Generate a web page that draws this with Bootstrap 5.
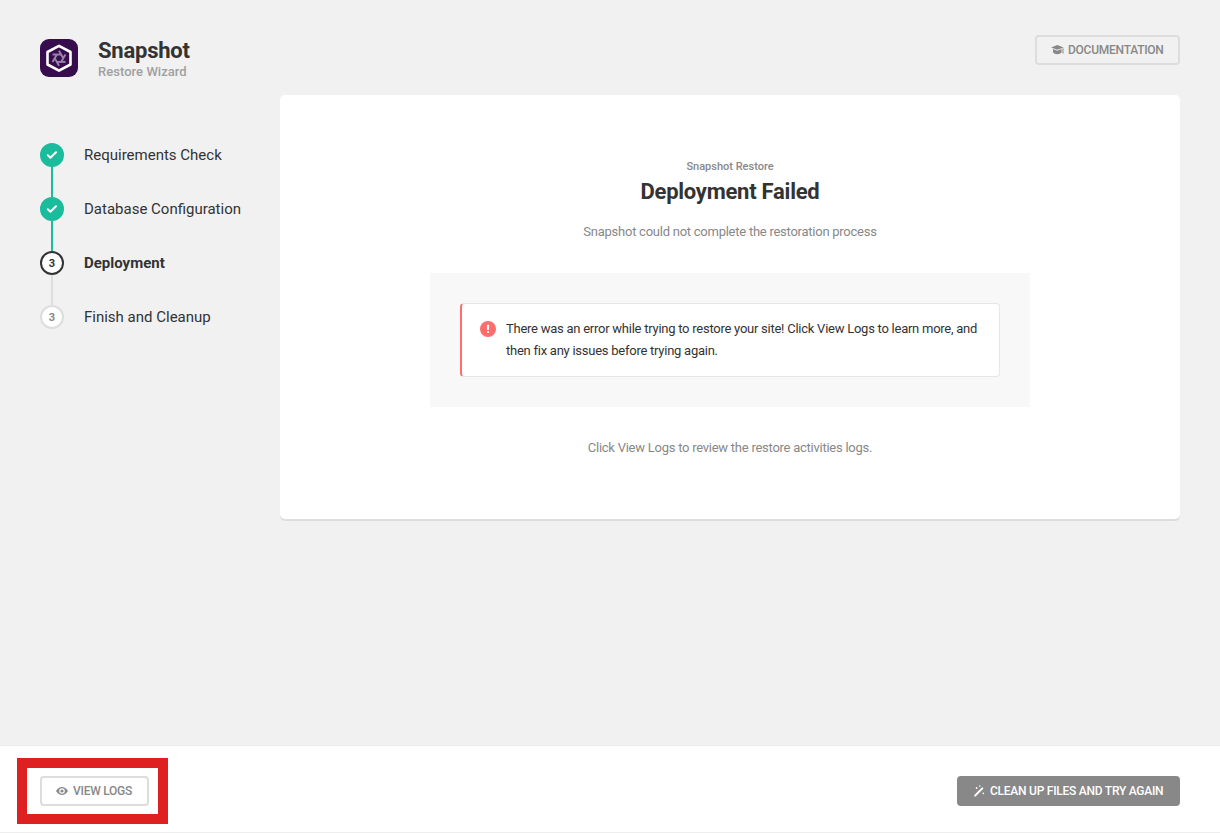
<!DOCTYPE html>
<html lang="en">
<head>
<meta charset="utf-8">
<meta name="viewport" content="width=device-width, initial-scale=1">
<title>Snapshot Restore Wizard</title>
<link href="https://cdn.jsdelivr.net/npm/bootstrap@5.3.0/dist/css/bootstrap.min.css" rel="stylesheet">
<script src="https://cdn.jsdelivr.net/npm/bootstrap@5.3.0/dist/js/bootstrap.bundle.min.js" defer></script>
<style>
body{font-family:Roboto,"Liberation Sans",sans-serif;background:#f1f1f1;color:#333;font-size:13px;letter-spacing:-.25px;height:833px;overflow:hidden}
.wizard-head{height:95px;padding:35px 40px 0}
.brand-logo{margin-top:4px;margin-right:20px}
.brand-title{font-size:22px;line-height:30px;font-weight:700;letter-spacing:-.22px;padding-top:1px}
.brand-sub{font-size:13px;line-height:12px;font-weight:500;color:#a0a0a0;letter-spacing:.04px}
.btn-wiz{height:30px;border:2px solid #ddd;border-radius:4px;padding:0 14px;font-size:12px;line-height:26px;font-weight:500;color:#888;letter-spacing:-.25px;gap:4px}
.btn-wiz svg{flex:none}
.btn-wiz span{white-space:nowrap}
.btn-docs{width:145px}
.btn-logs{width:109px}
.btn-solid{width:223px;background:#888;border-color:#888;color:#fff}
.wizard-side{width:280px;padding:48px 0 0 40px}
.wizard-step{height:54px;font-size:15px;line-height:24px;letter-spacing:0}
.step-rail{width:24px;margin-right:20px}
.step-dot{width:24px;height:24px;flex:none;border-radius:50%;border:2px solid #ddd;background:#fff;color:#888;font-size:11px;font-weight:700;line-height:21px}
.step-line{width:2px;flex:1;background:#ddd}
.is-done .step-dot{background:#1abc9c;border-color:#1abc9c}
.is-done .step-line{background:#1abc9c}
.is-now .step-dot{border-color:#333;color:#333}
.panel{width:900px;height:424px;border-radius:5px;box-shadow:0 2px 0 #dcdddc;padding-top:64px}
.panel-kicker{font-size:11px;line-height:16px;font-weight:500;color:#888;letter-spacing:0}
.panel-title{font-size:22px;line-height:30px;font-weight:700;margin:2px 0 14px}
.panel-text{line-height:22px;color:#888}
.notice-wrap{width:600px;height:134px;padding:30px;background:#f8f8f8;margin:30px auto}
.notice{height:74px;border:1px solid #e6e6e6;border-left:2px solid #ff6d6d;border-radius:4px;padding:14px 20px 0 18px;line-height:22px}
.notice svg{flex:none;margin:3px 10px 0 0}
.wizard-foot{height:88px;border-top:1px solid #eaeaea;border-bottom:1px solid #eee;padding:4px 40px 0}
.marker{inset:-18px -19px -18px -23px;border:10px solid #de2020}
</style>
</head>
<body class="d-flex flex-column">
<header class="wizard-head d-flex justify-content-between align-items-start">
  <div class="d-flex">
    <svg class="brand-logo" width="38" height="38" viewBox="0 0 38 38">
      <rect width="38" height="38" rx="9" fill="#370d4e"/>
      <path d="M19 6.900 30.500 13V25.500L19 31.700 7.500 25.500V13Z" fill="none" stroke="#fff" stroke-width="2.600" stroke-linejoin="round"/>
      <g fill="none" stroke="#9a84aa" stroke-width="1.900"><path id="blade" d="M21.200 15.500H12.500"/><use href="#blade" transform="rotate(60 19 19.200)"/><use href="#blade" transform="rotate(120 19 19.200)"/><use href="#blade" transform="rotate(180 19 19.200)"/><use href="#blade" transform="rotate(240 19 19.200)"/><use href="#blade" transform="rotate(300 19 19.200)"/></g>
    </svg>
    <div><div class="brand-title">Snapshot</div><div class="brand-sub">Restore Wizard</div></div>
  </div>
  <a class="btn btn-wiz btn-docs d-flex align-items-center" href="#">
    <svg width="13" height="12" viewBox="0 0 13 12" fill="#888"><path d="M6.300 1 12.600 3.400 6.300 5.800 0 3.400ZM2 5 6.300 6.700 10.600 5V8.400Q9.200 10.200 6.300 10.200T2 8.400ZM11.500 4.300h1V9.600h-1Z"/></svg>
    <span>DOCUMENTATION</span>
  </a>
</header>
<main class="d-flex flex-grow-1 align-items-start">
  <nav class="wizard-side">
    <div class="wizard-step is-done d-flex"><div class="step-rail d-flex flex-column align-items-center"><span class="step-dot d-flex align-items-center justify-content-center"><svg width="12" height="10" viewBox="0 0 12 10"><path d="M1.800 5.200 4.400 7.700 10 2.300" fill="none" stroke="#fff" stroke-width="2" stroke-linecap="round" stroke-linejoin="round"/></svg></span><span class="step-line"></span></div><span>Requirements Check</span></div>
    <div class="wizard-step is-done d-flex"><div class="step-rail d-flex flex-column align-items-center"><span class="step-dot d-flex align-items-center justify-content-center"><svg width="12" height="10" viewBox="0 0 12 10"><path d="M1.800 5.200 4.400 7.700 10 2.300" fill="none" stroke="#fff" stroke-width="2" stroke-linecap="round" stroke-linejoin="round"/></svg></span><span class="step-line"></span></div><span>Database Configuration</span></div>
    <div class="wizard-step is-now d-flex"><div class="step-rail d-flex flex-column align-items-center"><span class="step-dot text-center">3</span><span class="step-line"></span></div><span class="fw-bold">Deployment</span></div>
    <div class="wizard-step d-flex"><div class="step-rail"><span class="step-dot d-block text-center">3</span></div><span>Finish and Cleanup</span></div>
  </nav>
  <section class="panel bg-white text-center">
    <div class="panel-kicker">Snapshot Restore</div>
    <h1 class="panel-title">Deployment Failed</h1>
    <p class="panel-text mb-0">Snapshot could not complete the restoration process</p>
    <div class="notice-wrap">
      <div class="notice bg-white d-flex align-items-start text-start">
        <svg width="16" height="16" viewBox="0 0 16 16"><circle cx="8" cy="8" r="8" fill="#ff6d6d"/><path d="M6.800 3.800h2.400L8.900 9H7.100ZM7 10.200h2v1.900H7Z" fill="#fff"/></svg>
        <span>There was an error while trying to restore your site! Click View Logs to learn more, and<br>then fix any issues before trying again.</span>
      </div>
    </div>
    <p class="panel-text mb-0">Click View Logs to review the restore activities logs.</p>
  </section>
</main>
<footer class="wizard-foot bg-white d-flex justify-content-between align-items-center">
  <div class="position-relative">
    <a class="btn btn-wiz btn-logs d-flex align-items-center" href="#">
      <svg width="13" height="12" viewBox="0 0 13 12"><path d="M0 6Q2.600 1.900 6 1.900T12 6Q9.400 10.100 6 10.100T0 6Z" fill="#888"/><circle cx="6" cy="6" r="2.200" fill="none" stroke="#fff" stroke-width="1.200"/></svg>
      <span>VIEW LOGS</span>
    </a>
    <span class="marker position-absolute pe-none"></span>
  </div>
  <a class="btn btn-wiz btn-solid d-flex align-items-center" href="#">
    <svg width="13" height="12" viewBox="0 0 13 12" fill="#fff"><path d="M2.100 10.600 6.900 5.800" stroke="#fff" stroke-width="2" stroke-linecap="round"/><path d="M8 4.700 9.300 3.400" stroke="#fff" stroke-width="2" stroke-linecap="round"/><circle cx="3.600" cy="3" r=".9"/><circle cx="6.800" cy="1" r=".8"/><circle cx="10.300" cy="8.400" r=".8"/></svg>
    <span>CLEAN UP FILES AND TRY AGAIN</span>
  </a>
</footer>
</body>
</html>
